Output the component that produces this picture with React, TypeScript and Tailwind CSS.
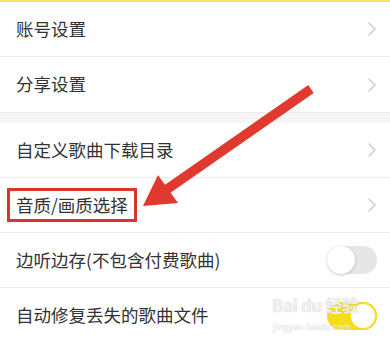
import React from 'react';

const FONT = '"Noto Sans CJK SC", "Noto Sans", sans-serif';

function Chevron() {
  return (
    <svg width="10" height="16" viewBox="0 0 10 16" className="shrink-0">
      <path d="M2 2l6 6-6 6" fill="none" stroke="#cfcfcf" strokeWidth="1.6" strokeLinecap="round" strokeLinejoin="round" />
    </svg>
  );
}

function Toggle({ on }: { on?: boolean }) {
  if (on) {
    return (
      <div className="relative w-[50px] h-[28px] rounded-full bg-[#f7dc1c] shrink-0">
        <div className="absolute right-0 top-0 w-[28px] h-[28px] rounded-full bg-white border-2 border-[#f7dc1c]" />
      </div>
    );
  }
  return (
    <div className="relative w-[50px] h-[28px] rounded-full bg-[#e6e6e6] shrink-0">
      <div className="absolute left-0 top-0 w-[28px] h-[28px] rounded-full bg-white shadow-[0_1px_3px_rgba(0,0,0,0.2)]" />
    </div>
  );
}

function Row({ label, right, last, boxed }: { label: string; right: React.ReactNode; last?: boolean; boxed?: boolean }) {
  return (
    <div className={`h-[55px] flex items-center justify-between pl-4 pr-[13px] bg-white ${last ? '' : 'border-b border-[#ececec]'}`}>
      {boxed ? (
        <span className="-ml-[9px] px-[6px] py-[1px] border-[3px] border-[#d8352c] text-[17.5px] text-[#333]">{label}</span>
      ) : (
        <span className="text-[17.5px] text-[#333]">{label}</span>
      )}
      {right}
    </div>
  );
}

export default function App() {
  return (
    <div className="relative w-[390px] h-[341px] overflow-hidden bg-white" style={{ fontFamily: FONT }}>
      <div className="h-[2px] bg-[#f1e66c]" />
      <Row label="账号设置" right={<Chevron />} />
      <Row label="分享设置" right={<Chevron />} last />
      <div className="h-[11px] bg-[#f6f6f6] border-t border-[#ececec]" />
      <Row label="自定义歌曲下载目录" right={<Chevron />} />
      <Row label="音质/画质选择" right={<Chevron />} boxed />
      <Row label="边听边存(不包含付费歌曲)" right={<Toggle />} />
      <Row label="自动修复丢失的歌曲文件" right={<Toggle on />} last />

      {/* annotation arrow */}
      <svg className="absolute inset-0 pointer-events-none" width="390" height="341" viewBox="0 0 390 341">
        <line x1="311" y1="89" x2="166" y2="190" stroke="#e0392f" strokeWidth="9.5" />
        <polygon points="143,206 158,175 178,203" fill="#e0392f" />
      </svg>

      {/* watermark */}
      <div
        className="absolute left-[272px] top-[295px] pointer-events-none whitespace-pre leading-[20px] text-[17px] font-bold tracking-tight text-[rgba(255,255,255,0.75)]"
        style={{ textShadow: '0 0 1px #bbb' }}
      >
        {'Bai du 经验'}
      </div>
      <div
        className="absolute left-[273px] top-[321px] pointer-events-none whitespace-pre leading-[11px] text-[9px] text-[rgba(255,255,255,0.8)]"
        style={{ textShadow: '0 0 1px #bbb' }}
      >
        {'jingyan.baidu.com'}
      </div>
    </div>
  );
}
